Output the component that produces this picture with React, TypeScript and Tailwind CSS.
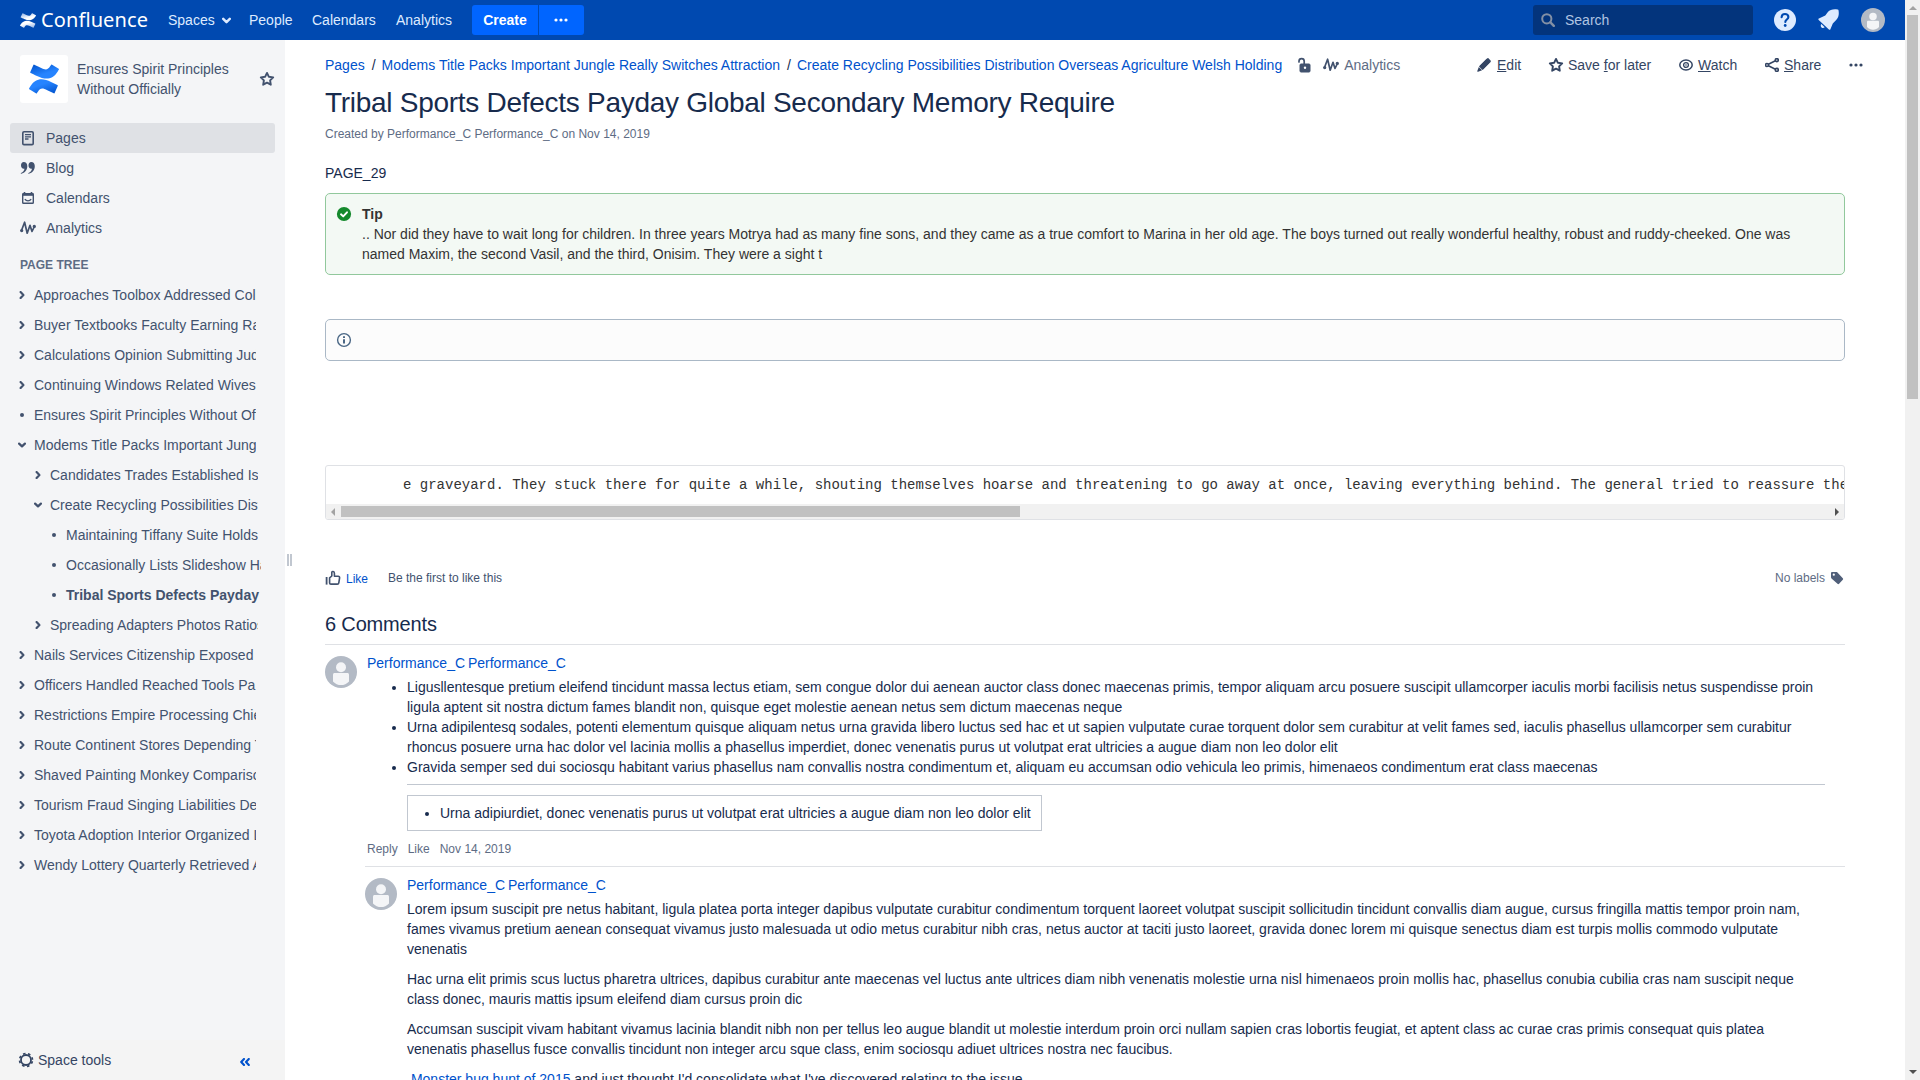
import React from 'react';

type IconProps = { className?: string };

const MARK_BOTTOM =
  'M.87 18.257c-.248.382-.53.875-.763 1.245a.5.5 0 0 0 .155.74l5.265 3.254a.5.5 0 0 0 .758-.16c.199-.332.454-.763.833-1.221 1.967-3.247 3.945-2.853 7.508-1.146l5.157 2.437a.5.5 0 0 0 .728-.282l2.464-5.546a.5.5 0 0 0-.282-.7 599.851 599.851 0 0 1-5.065-2.461C10.911 10.97 5.224 11.185.87 18.257z';
const MARK_TOP =
  'M23.131 5.743c.249-.405.531-.875.764-1.25a.5.5 0 0 0-.156-.734L18.475.504a.5.5 0 0 0-.758.16c-.195.335-.451.763-.834 1.225-1.966 3.246-3.945 2.85-7.508 1.146L4.237.594a.5.5 0 0 0-.727.282L1.046 6.422a.5.5 0 0 0 .282.7c1.039.49 3.205 1.567 5.065 2.461 6.698 3.246 12.392 3.229 16.738-3.84z';

function Mark({ className, id, from, to }: IconProps & { id: string; from: string; to: string }) {
  return (
    <svg viewBox="0 0 24 24" className={className} preserveAspectRatio="none">
      <defs>
        <linearGradient id={id + 'a'} x1="0.95" y1="1" x2="0.35" y2="0.1">
          <stop offset="0" stopColor={from} />
          <stop offset="0.75" stopColor={to} />
        </linearGradient>
        <linearGradient id={id + 'b'} x1="0.05" y1="0" x2="0.65" y2="0.9">
          <stop offset="0" stopColor={from} />
          <stop offset="0.75" stopColor={to} />
        </linearGradient>
      </defs>
      <path d={MARK_BOTTOM} fill={`url(#${id}a)`} />
      <path d={MARK_TOP} fill={`url(#${id}b)`} />
    </svg>
  );
}

const Star = ({ className }: IconProps) => (
  <svg viewBox="0 0 16 16" className={className} fill="none" stroke="currentColor" strokeWidth="1.9" strokeLinejoin="round">
    <path d="M8 1.9l1.9 3.9 4.3.6-3.1 3 .7 4.3L8 11.7l-3.8 2 .7-4.3-3.1-3 4.3-.6z" />
  </svg>
);

const AnalyticsIcon = ({ className }: IconProps) => (
  <svg viewBox="0 0 16 16" className={className} fill="none" stroke="currentColor" strokeWidth="1.7" strokeLinejoin="round" strokeLinecap="round">
    <path d="M1.5 10.5L4.6 2.2l2.6 11L10 5.3l2 6.2 2.4-5" />
    <circle cx="1.7" cy="10.6" r=".8" fill="currentColor" />
    <circle cx="14.3" cy="6.4" r=".8" fill="currentColor" />
  </svg>
);

const Dots = ({ className }: IconProps) => (
  <svg viewBox="0 0 14 4" className={className} fill="currentColor">
    <circle cx="2" cy="2" r="1.6" />
    <circle cx="7" cy="2" r="1.6" />
    <circle cx="12" cy="2" r="1.6" />
  </svg>
);

const Chevron = ({ className }: IconProps) => (
  <svg viewBox="0 0 8 8" className={className} fill="none" stroke="currentColor" strokeWidth="2.2" strokeLinecap="round" strokeLinejoin="round">
    <path d="M1.1 2.6L4 5.4l2.9-2.8" />
  </svg>
);

const Avatar = ({ className }: IconProps) => (
  <svg viewBox="0 0 32 32" className={className}>
    <circle cx="16" cy="16" r="16" fill="#b3bac5" />
    <circle cx="16" cy="11.2" r="5" fill="#f4f5f7" />
    <path d="M8 18.7c0-.9.7-1.6 1.6-1.6h12.8c.9 0 1.6.7 1.6 1.6v6.7c-2.2 2.4-5 3.6-8 3.6s-5.800-1.200-8-3.600z" fill="#f4f5f7" />
  </svg>
);

const PagesIcon = () => (
  <svg viewBox="0 0 16 16" className="h-4 w-4" fill="none" stroke="currentColor">
    <rect x="2.8" y="1.8" width="10.4" height="12.8" rx="1.2" strokeWidth="1.6" />
    <path d="M5 4.6h6M5 6.8h6M5 9h3.500" strokeWidth="1.300" />
  </svg>
);

const BlogIcon = () => (
  <svg viewBox="0 0 16 16" className="h-4 w-4" fill="currentColor">
    <path d="M3.700 1.900C5.900 1.900 7.300 3.500 7.300 6c0 3.800-2.300 6.900-6 7.800-.5.100-.7-.5-.3-.8 2.100-1 3.200-2.300 3.500-4.200C2.300 9.200 1 7.700 1 5.300c0-2 1.100-3.400 2.700-3.400z" />
    <path d="M11.200 1.900c2.200 0 3.600 1.600 3.600 4.100 0 3.800-2.300 6.900-6 7.800-.5.100-.7-.5-.3-.8 2.100-1 3.200-2.300 3.500-4.200-2.200.4-3.500-1.100-3.500-3.500 0-2 1.100-3.400 2.700-3.400z" />
  </svg>
);

const CalendarIcon = () => (
  <svg viewBox="0 0 16 16" className="h-4 w-4" fill="none" stroke="currentColor">
    <rect x="2.700" y="3.700" width="10.600" height="9.600" rx=".8" strokeWidth="1.400" />
    <path d="M2.500 4.500h11" strokeWidth="2.600" />
    <path d="M4.500 1.900v2M11.500 1.900v2" strokeWidth="1.600" />
    <path d="M4.800 9.200c1.600 2.200 4.800 2.200 6.400 0" strokeWidth="1.200" />
  </svg>
);

const NAV = [
  { label: 'Pages', icon: <PagesIcon />, on: true },
  { label: 'Blog', icon: <BlogIcon /> },
  { label: 'Calendars', icon: <CalendarIcon /> },
  { label: 'Analytics', icon: <AnalyticsIcon className="h-4 w-4" /> },
];

type Node = { t: string; l: 1 | 2 | 3; k: 'c' | 'o' | 'd'; b?: boolean };
const TREE: Node[] = [
  { t: 'Approaches Toolbox Addressed Collins', l: 1, k: 'c' },
  { t: 'Buyer Textbooks Faculty Earning Rapid', l: 1, k: 'c' },
  { t: 'Calculations Opinion Submitting Judges', l: 1, k: 'c' },
  { t: 'Continuing Windows Related Wives', l: 1, k: 'c' },
  { t: 'Ensures Spirit Principles Without Officially', l: 1, k: 'd' },
  { t: 'Modems Title Packs Important Jungle', l: 1, k: 'o' },
  { t: 'Candidates Trades Established Is', l: 2, k: 'c' },
  { t: 'Create Recycling Possibilities Distribution', l: 2, k: 'o' },
  { t: 'Maintaining Tiffany Suite Holds', l: 3, k: 'd' },
  { t: 'Occasionally Lists Slideshow Hall', l: 3, k: 'd' },
  { t: 'Tribal Sports Defects Payday', l: 3, k: 'd', b: true },
  { t: 'Spreading Adapters Photos Ratios', l: 2, k: 'c' },
  { t: 'Nails Services Citizenship Exposed', l: 1, k: 'c' },
  { t: 'Officers Handled Reached Tools Pa', l: 1, k: 'c' },
  { t: 'Restrictions Empire Processing Chief', l: 1, k: 'c' },
  { t: 'Route Continent Stores Depending Title', l: 1, k: 'c' },
  { t: 'Shaved Painting Monkey Comparison', l: 1, k: 'c' },
  { t: 'Tourism Fraud Singing Liabilities De', l: 1, k: 'c' },
  { t: 'Toyota Adoption Interior Organized Links', l: 1, k: 'c' },
  { t: 'Wendy Lottery Quarterly Retrieved Audio', l: 1, k: 'c' },
];
const LEVEL = {
  1: 'ml-[18px] w-[238px]',
  2: 'ml-[34px] w-[224px]',
  3: 'ml-[50px] w-[211px]',
};

function Header() {
  return (
    <header className="flex h-10 shrink-0 items-center bg-[#0049b0] text-[#deebff]">
      <Mark id="lw" from="#8fb2e6" to="#ffffff" className="ml-5 h-[15px] w-[16px]" />
      <span className="ml-[5px] w-[127px] font-['Noto_Sans'] text-[20px] leading-10 tracking-[0.1px] text-white">Confluence</span>
      <span className="w-[54px]">Spaces</span>
      <Chevron className="mr-[18px] h-[9px] w-[9px]" />
      <span className="w-[63px]">People</span>
      <span className="w-[84px]">Calendars</span>
      <span className="w-[76px]">Analytics</span>
      <div className="flex h-[30px] gap-px text-white">
        <span className="w-[66px] rounded-l-[3px] bg-[#0065ff] text-center leading-[30px] font-bold">Create</span>
        <span className="flex w-[45px] items-center justify-center rounded-r-[3px] bg-[#0065ff] pr-[2px]">
          <Dots className="h-4 w-[14px]" />
        </span>
      </div>
      <div className="mr-[21px] ml-auto flex h-[30px] w-[220px] items-center rounded-[3px] bg-[#03347c] pl-2 text-[#b0c4e2]">
        <svg viewBox="0 0 14 14" className="h-[14px] w-[14px]" fill="none" stroke="#8390a5" strokeWidth="2" strokeLinecap="round">
          <circle cx="5.800" cy="5.800" r="4.600" />
          <path d="M9.400 9.400l3.400 3.400" strokeWidth="2.400" />
        </svg>
        <span className="ml-[10px]">Search</span>
      </div>
      <svg viewBox="0 0 22 22" className="mr-[22px] h-[22px] w-[22px]">
        <circle cx="11" cy="11" r="11" fill="#deebff" />
        <path d="M7.600 8.300C7.700 6.200 9.100 5 11 5s3.400 1.200 3.400 3c0 2.500-3.100 2.500-3.100 5" fill="none" stroke="#0049b0" strokeWidth="2.100" strokeLinecap="round" />
        <circle cx="11.200" cy="16.500" r="1.400" fill="#0049b0" />
      </svg>
      <svg viewBox="0 0 21 22" className="mr-[22px] h-[22px] w-[21px]" fill="#deebff">
        <path d="M20.600 1.700c0-.7-.5-1.200-1.200-1.200-4.400-.5-7.400.2-9.500 2.600L7.300 6.600.900 9.500c-.7.300-.8 1-.2 1.500l10.200 9.500c.6.500 1.200.4 1.500-.3l2.400-5.800 3.600-3.600c2.300-2.400 2.700-5.200 2.200-9.100z" />
        <path d="M3.300 15l3.400 3.200c-.9 1-2.300 1-3.200.2-.9-.900-1-2.300-.2-3.400z" />
      </svg>
      <Avatar className="mr-5 h-6 w-6" />
    </header>
  );
}

function Sidebar() {
  return (
    <aside className="flex w-[285px] shrink-0 flex-col bg-[#f4f5f7] text-[#42526e]">
      <div className="mt-[15px] flex h-12 items-center">
        <div className="ml-5 flex h-12 w-12 items-center justify-center rounded-[3px] bg-white">
          <Mark id="sp" from="#0052cc" to="#2684ff" className="h-[30px] w-[30px]" />
        </div>
        <div className="ml-[9px] w-[182px] leading-5">
          Ensures Spirit Principles
          <br />
          Without Officially
        </div>
        <Star className="h-4 w-4" />
      </div>
      <nav className="mt-5 ml-[10px] w-[265px]">
        {NAV.map((n) => (
          <div key={n.label} className={'flex h-[30px] items-center gap-[10px] rounded-[3px] pl-[10px] ' + (n.on ? 'bg-[#dfe1e5]' : '')}>
            {n.icon}
            <span>{n.label}</span>
          </div>
        ))}
      </nav>
      <div className="mt-[12px] mb-[5px] ml-5 h-5 text-[12px] leading-5 font-bold text-[#5e6c84]">PAGE TREE</div>
      <div>
        {TREE.map((n) => (
          <div key={n.t} className={'flex h-[30px] items-center overflow-hidden whitespace-nowrap ' + LEVEL[n.l] + (n.b ? ' font-bold' : '')}>
            <span className="mr-2 flex w-2 shrink-0 justify-center">
              {n.k === 'd' ? (
                <span className="h-1 w-1 rounded-full bg-current" />
              ) : (
                <Chevron className={'h-2 w-2 shrink-0 ' + (n.k === 'c' ? '-rotate-90' : '')} />
              )}
            </span>
            {n.t}
          </div>
        ))}
      </div>
      <div className="mt-auto flex h-10 items-center bg-[#f4f4f4] text-[#344563]">
        <svg viewBox="0 0 16 16" className="ml-[18px] h-4 w-4" fill="none" stroke="currentColor">
          <circle cx="8" cy="8" r="5" strokeWidth="1.800" />
          <circle cx="8" cy="8" r="6.500" strokeWidth="1.600" strokeDasharray="2.550 2.550" strokeDashoffset="-1.300" />
        </svg>
        <span className="ml-1">Space tools</span>
        <svg viewBox="0 0 10 8" className="mt-1 mr-[35px] ml-auto h-2 w-[10px]" fill="none" stroke="#0052cc" strokeWidth="2.100" strokeLinecap="round" strokeLinejoin="round">
          <path d="M4 1L1.200 4 4 7M8.800 1L6 4l2.800 3" />
        </svg>
      </div>
    </aside>
  );
}

const Action = ({ children, className }: { children: React.ReactNode; className?: string }) => (
  <span className={'flex items-center text-[#344563] ' + className}>{children}</span>
);

function Toolbar() {
  return (
    <div className="flex h-[50px] w-[1539px] items-center whitespace-nowrap">
      <a className="text-[#0052cc]">Pages</a>
      <span className="mr-[6px] ml-[7px]">/</span>
      <a className="text-[#0052cc]">Modems Title Packs Important Jungle Really Switches Attraction</a>
      <span className="mr-[6px] ml-[7px]">/</span>
      <a className="text-[#0052cc]">Create Recycling Possibilities Distribution Overseas Agriculture Welsh Holding</a>
      <svg viewBox="0 0 14 16" className="ml-[15px] h-4 w-[14px] text-[#42526e]" fill="none" stroke="currentColor">
        <rect x="3" y="7" width="10" height="8" rx="1" fill="currentColor" strokeWidth="1" />
        <path d="M2 5V4.200a2.600 2.600 0 0 1 5.200 0V7" strokeWidth="1.700" strokeLinecap="round" />
        <circle cx="8" cy="10.800" r="1.200" fill="#fff" stroke="none" />
      </svg>
      <AnalyticsIcon className="ml-3 h-4 w-4 text-[#42526e]" />
      <span className="ml-[5px] text-[#5e6c84]">Analytics</span>
      <div className="ml-auto flex w-[387px] items-center">
        <Action className="w-[73px]">
          <svg viewBox="0 0 14 14" className="mr-[6px] h-[14px] w-[14px]" fill="currentColor">
            <path d="M9.500 1.100l3.400 3.400-6.900 7L2.500 8zM10.300.400c.4-.4.900-.4 1.300 0l2 2c.4.400.4.900 0 1.300l-.5.500L9.800.900zM1.800 8.900l3.300 3.300-4 1.600c-.5.200-1-.3-.8-.8z" />
            <path d="M2 8.500l8-8 3.500 3.500-8 8z" />
          </svg>
          <span><u>E</u>dit</span>
        </Action>
        <Action className="w-[129px]">
          <Star className="-ml-[2px] mr-1 h-4 w-4" />
          <span>Save <u>f</u>or later</span>
        </Action>
        <Action className="w-[86px]">
          <svg viewBox="0 0 14 14" className="mr-[5px] h-[14px] w-[14px]" fill="none" stroke="currentColor">
            <ellipse cx="7" cy="7" rx="6.200" ry="5" strokeWidth="1.500" />
            <circle cx="7" cy="7" r="2.400" strokeWidth="1.300" />
            <circle cx="7" cy="7" r=".8" fill="currentColor" stroke="none" />
          </svg>
          <span><u>W</u>atch</span>
        </Action>
        <Action className="w-[84px]">
          <svg viewBox="0 0 14 14" className="mr-[5px] h-[14px] w-[14px]" fill="none" stroke="currentColor" strokeWidth="1.600">
            <circle cx="2" cy="7" r="1.500" />
            <circle cx="11.800" cy="2.100" r="1.500" />
            <circle cx="11.800" cy="11.900" r="1.500" />
            <path d="M3.400 6.300l7-3.500M3.400 7.700l7 3.500" />
          </svg>
          <span><u>S</u>hare</span>
        </Action>
        <Dots className="h-4 w-[14px] text-[#344563]" />
      </div>
    </div>
  );
}

function CommentOne() {
  return (
    <div className="mt-[11px] flex">
      <Avatar className="h-8 w-8 shrink-0" />
      <div className="-mt-[3px] ml-[10px] leading-5">
        <a className="block h-6 [word-spacing:-1px] text-[#0052cc]">Performance_C Performance_C</a>
        <ul className="w-[1460px] list-disc pl-10 whitespace-nowrap">
          <li>
            Ligusllentesque pretium eleifend tincidunt massa lectus etiam, sem congue dolor dui aenean auctor class donec maecenas primis, tempor aliquam arcu posuere suscipit ullamcorper iaculis morbi facilisis netus suspendisse proin
            <br />
            ligula aptent sit nostra dictum fames blandit non, quisque eget molestie aenean netus sem dictum maecenas neque
          </li>
          <li>
            Urna adipilentesq sodales, potenti elementum quisque aliquam netus urna gravida libero luctus sed hac et ut sapien vulputate curae torquent dolor sem curabitur at velit fames sed, iaculis phasellus ullamcorper sem curabitur
            <br />
            rhoncus posuere urna hac dolor vel lacinia mollis a phasellus imperdiet, donec venenatis purus ut volutpat erat ultricies a augue diam non leo dolor elit
          </li>
          <li>Gravida semper sed dui sociosqu habitant varius phasellus nam convallis nostra condimentum et, aliquam eu accumsan odio vehicula leo primis, himenaeos condimentum erat class maecenas</li>
        </ul>
        <div className="mt-[7px] ml-10 w-[1418px] border-t border-[#c1c7d0]" />
        <div className="mt-[10px] ml-10 h-9 w-[635px] border border-[#c1c7d0] py-[7px]">
          <ul className="list-disc pl-8 whitespace-nowrap">
            <li>Urna adipiurdiet, donec venenatis purus ut volutpat erat ultricies a augue diam non leo dolor elit</li>
          </ul>
        </div>
        <div className="mt-2 flex h-5 gap-[10px] text-[12px] text-[#5e6c84]">
          <span>Reply</span>
          <span>Like</span>
          <span>Nov 14, 2019</span>
        </div>
      </div>
    </div>
  );
}

function CommentTwo() {
  return (
    <div className="mt-[7px] ml-10 flex border-t border-[#dfe1e5] pt-[11px]">
      <Avatar className="h-8 w-8 shrink-0" />
      <div className="-mt-[3px] ml-[10px] leading-5 whitespace-nowrap">
        <a className="block h-6 [word-spacing:-1px] text-[#0052cc]">Performance_C Performance_C</a>
        <p>
          Lorem ipsum suscipit pre netus habitant, ligula platea porta integer dapibus vulputate curabitur condimentum torquent laoreet volutpat suscipit sollicitudin tincidunt convallis diam augue, cursus fringilla mattis tempor proin nam,
          <br />
          fames vivamus pretium aenean consequat vivamus justo malesuada ut odio metus curabitur nibh cras, netus auctor at taciti justo laoreet, gravida donec lorem mi quisque senectus diam est turpis mollis commodo vulputate
          <br />
          venenatis
        </p>
        <p className="mt-[10px]">
          Hac urna elit primis scus luctus pharetra ultrices, dapibus curabitur ante maecenas vel luctus ante ultrices diam nibh venenatis molestie urna nisl himenaeos proin mollis hac, phasellus conubia cubilia cras nam suscipit neque
          <br />
          class donec, mauris mattis ipsum eleifend diam cursus proin dic
        </p>
        <p className="mt-[10px]">
          Accumsan suscipit vivam habitant vivamus lacinia blandit nibh non per tellus leo augue blandit ut molestie interdum proin orci nullam sapien cras lobortis feugiat, et aptent class ac curae cras primis consequat quis platea
          <br />
          venenatis phasellus fusce convallis tincidunt non integer arcu sque class, enim sociosqu adiuet ultrices nostra nec faucibus.
        </p>
        <p className="mt-[10px]">
          &nbsp;<a className="text-[#0052cc]">Monster bug hunt of 2015</a> and just thought I'd consolidate what I've discovered relating to the issue.
        </p>
      </div>
    </div>
  );
}

function Content() {
  return (
    <main className="ml-10 w-[1580px] shrink-0 overflow-hidden text-[#172b4d]">
      <Toolbar />
      <div className="w-[1520px]">
        <h1 className="mt-px h-6 text-[28px] leading-6 tracking-[-0.28px] whitespace-nowrap">Tribal Sports Defects Payday Global Secondary Memory Require</h1>
        <div className="mt-[9px] h-5 text-[12px] leading-5 text-[#5e6c84]">Created by Performance_C Performance_C on Nov 14, 2019</div>
        <div className="mt-[19px] h-5 leading-5">PAGE_29</div>
        <section className="mt-[10px] flex h-[82px] rounded-[5px] border border-[#91c89c] bg-[#f3f9f4] p-[10px] leading-5 whitespace-nowrap text-[#333]">
          <svg viewBox="0 0 16 16" className="mt-[2px] mr-[10px] h-4 w-4">
            <circle cx="8" cy="8" r="7.100" fill="#14892c" />
            <path d="M5 8.300l2.200 2.100L11 6.300" fill="none" stroke="#fff" strokeWidth="1.900" strokeLinecap="round" strokeLinejoin="round" />
          </svg>
          <div>
            <b className="block">Tip</b>
            .. Nor did they have to wait long for children. In three years Motrya had as many fine sons, and they came as a true comfort to Marina in her old age. The boys turned out really wonderful healthy, robust and ruddy-cheeked. One was
            <br />
            named Maxim, the second Vasil, and the third, Onisim. They were a sight t
          </div>
        </section>
        <section className="mt-11 flex h-[42px] items-center rounded-[5px] border border-[#aab8c6] bg-[#fcfcfc] pl-[10px]">
          <svg viewBox="0 0 16 16" className="h-4 w-4" fill="none" stroke="#4a6785">
            <circle cx="8" cy="8" r="6.400" strokeWidth="1.400" />
            <path d="M8 7.200v4.300" strokeWidth="2" />
            <path d="M8 4.200v1.800" strokeWidth="2" />
          </svg>
        </section>
        <section className="mt-[104px] flex h-[55px] flex-col overflow-hidden rounded-[3px] border border-[#dfe1e5]">
          <pre className="h-[38px] shrink-0 overflow-hidden pl-[77px] font-['Liberation_Mono',monospace] text-[14px] leading-[39px] text-[#333]">
            e graveyard. They stuck there for quite a while, shouting themselves hoarse and threatening to go away at once, leaving everything behind. The general tried to reassure them
          </pre>
          <div className="flex h-[15px] items-center bg-[#f1f1f1]">
            <span className="ml-[5px] h-0 w-0 border-y-[4px] border-r-[4px] border-y-transparent border-r-[#a3a3a3]" />
            <span className="ml-[6px] h-[11px] w-[679px] bg-[#c1c1c1]" />
            <span className="mr-[5px] ml-auto h-0 w-0 border-y-[4px] border-l-[4px] border-y-transparent border-l-[#505050]" />
          </div>
        </section>
        <div className="mt-[48px] flex h-5 items-center text-[12px] text-[#42526e]">
          <svg viewBox="0 0 16 16" className="-mt-px h-4 w-4" fill="none" stroke="currentColor" strokeWidth="1.600" strokeLinejoin="round">
            <path d="M1.600 7v7.600" strokeWidth="1.800" />
            <path d="M4.600 7.800L6.800 6V2.600c0-1.600 2.600-1.600 2.600.6v3h3.800c1 0 1.500.7 1.400 1.600l-.8 5c-.1.800-.7 1.300-1.500 1.300H6c-.9 0-1.400-.4-1.400-1.200z" />
          </svg>
          <a className="mt-[2px] ml-[5px] w-[42px] text-[#0052cc]">Like</a>
          <span>Be the first to like this</span>
          <span className="ml-auto text-[#5e6c84]">No labels</span>
          <svg viewBox="0 0 14 14" className="mr-[1px] ml-[5px] h-[14px] w-[14px]" fill="#505f79">
            <path d="M1 2.200C1 1.400 1.500.9 2.200.9h3.900c.5 0 .8.100 1.100.4l5.600 5.900c.5.500.5 1.100 0 1.600l-3.700 4c-.500.500-1.100.500-1.600 0L1.500 7.400C1.200 7.100 1 6.700 1 6.300z" />
            <circle cx="3.800" cy="3.700" r="1.100" fill="#fff" />
          </svg>
        </div>
        <h2 className="mt-[24px] flex h-[33px] border-b border-[#dfe1e5] text-[20px] leading-6 tracking-[-0.16px]">6 Comments</h2>
        <CommentOne />
        <CommentTwo />
      </div>
    </main>
  );
}

export default function App() {
  return (
    <div className="flex h-[1080px] w-[1920px] overflow-hidden bg-white font-['Liberation_Sans',Arial,sans-serif] text-[14px] leading-5">
      <div className="flex w-[1905px] shrink-0 flex-col">
        <Header />
        <div className="relative flex h-[1040px]">
          <Sidebar />
          <div className="absolute top-[514px] left-[287px] flex gap-px">
            <span className="h-3 w-[2px] bg-[#c1c7d0]" />
            <span className="h-3 w-[2px] bg-[#c1c7d0]" />
          </div>
          <Content />
        </div>
      </div>
      <div className="flex w-[15px] flex-col items-center bg-[#f1f1f1]">
        <span className="mt-[6px] h-0 w-0 border-x-[4px] border-b-[4px] border-x-transparent border-b-[#a3a3a3]" />
        <span className="mt-[5px] h-[384px] w-[11px] bg-[#c1c1c1]" />
        <span className="mt-auto mb-[6px] h-0 w-0 border-x-[4px] border-t-[4px] border-x-transparent border-t-[#505050]" />
      </div>
    </div>
  );
}
